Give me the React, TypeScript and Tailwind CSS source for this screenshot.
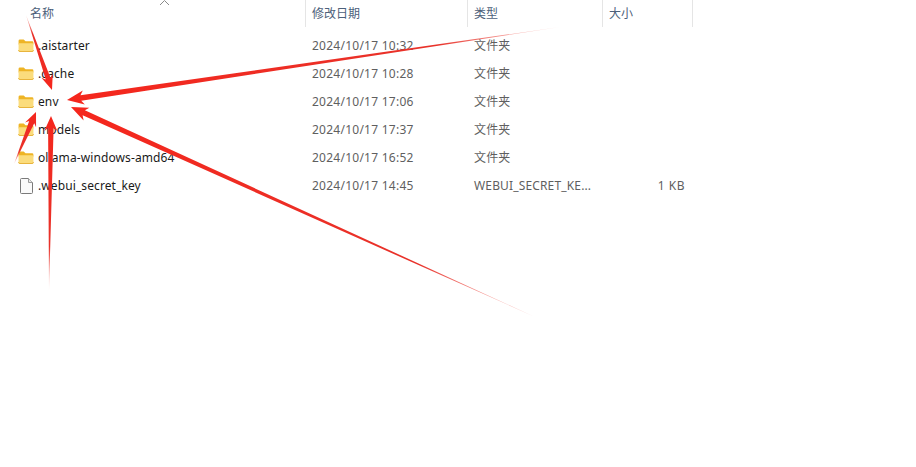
const FOLDER_ROWS = [
  { name: ".aistarter", date: "2024/10/17 10:32" },
  { name: ".cache", date: "2024/10/17 10:28" },
  { name: "env", date: "2024/10/17 17:06" },
  { name: "models", date: "2024/10/17 17:37" },
  { name: "ollama-windows-amd64", date: "2024/10/17 16:52" },
];

const FONT = "font-['Noto_Sans','Noto_Sans_CJK_SC',sans-serif]";

// tail point -> tip, tapered shaft with a barbed head
const ARROWS = [
  { id: "a1", tail: [26, 15], tip: [52, 90], neck: 5, head: 6, len: 15 },
  { id: "a2", tail: [560, 27], tip: [67, 100], neck: 5.5, head: 7, len: 17 },
  { id: "a3", tail: [535, 317], tip: [71, 107], neck: 5.5, head: 7, len: 17 },
  { id: "a4", tail: [14, 164], tip: [36, 112], neck: 5.5, head: 6, len: 14 },
  { id: "a5", tail: [49, 290], tip: [51, 116], neck: 5.5, head: 6.5, len: 15 },
];

function arrowPoints(a: (typeof ARROWS)[number]) {
  const [tx, ty] = a.tail;
  const [px, py] = a.tip;
  const d = Math.hypot(px - tx, py - ty);
  const ux = (px - tx) / d;
  const uy = (py - ty) / d;
  const nx = -uy;
  const ny = ux;
  const at = (back: number, side: number) =>
    `${px - ux * back + nx * side},${py - uy * back + ny * side}`;
  return [
    `${tx},${ty}`,
    at(a.len - 3, a.neck / 2),
    at(a.len, a.head),
    at(0, 0),
    at(a.len, -a.head),
    at(a.len - 3, -a.neck / 2),
  ].join(" ");
}

function FolderIcon() {
  return (
    <svg width="16" height="13" viewBox="0 0 17 14" className="mb-0.5 shrink-0">
      <path d="M0.5 2 Q0.5 0.5 2 0.5 H6 L8 2.5 H15 Q16.5 2.5 16.5 4 V6 H0.5 Z" fill="#eeb425" />
      <path d="M0.5 4.5 H15 Q16.5 4.5 16.5 6 V12 Q16.5 13.5 15 13.5 H2 Q0.5 13.5 0.5 12 Z" fill="#fbdc7c" />
      <path d="M0.5 12 Q0.5 13.5 2 13.5 H15 Q16.5 13.5 16.5 12" fill="none" stroke="#e5ae2e" />
    </svg>
  );
}

function FileIcon() {
  return (
    <svg width="13" height="16" viewBox="0 0 13 16" className="ml-0.5 shrink-0">
      <path d="M0.5 1.5 Q0.5 0.5 1.5 0.5 H8.5 L12.5 4.5 V14.5 Q12.5 15.5 11.5 15.5 H1.5 Q0.5 15.5 0.5 14.5 Z" fill="#fafafa" stroke="#7a7a7a" />
      <path d="M8.5 0.5 V4.5 H12.5" fill="#e8e8e8" stroke="#9a9a9a" />
    </svg>
  );
}

function HeaderCell({ label, className }: { label: string; className: string }) {
  return (
    <div className={`flex h-[27px] items-center text-xs text-[#4c607a] ${className}`}>{label}</div>
  );
}

function Row({
  icon,
  name,
  date,
  type,
  size,
}: {
  icon: React.ReactNode;
  name: string;
  date: string;
  type: string;
  size?: string;
}) {
  return (
    <div className="grid h-7 grid-cols-[306px_162px_135px_90px] items-center text-xs text-[#5f5f5f]">
      <div className="flex items-center pl-[18px] text-[#1a1a1a]">
        <span className="flex w-5 items-center">{icon}</span>
        <span className="tracking-[0.1px]">{name}</span>
      </div>
      <div className="pl-1.5 tracking-[0.25px]">{date}</div>
      <div className="pl-1.5 tracking-[0.15px]">{type}</div>
      <div className="pr-2 text-right tracking-[0.5px]">{size}</div>
    </div>
  );
}

export default function App() {
  return (
    <div className={`relative h-[467px] w-[916px] overflow-hidden bg-white ${FONT}`}>
      <div className="grid w-[693px] grid-cols-[306px_162px_135px_90px]">
        <HeaderCell label="名称" className="border-r border-[#e5e5e5] pl-[30px]" />
        <HeaderCell label="修改日期" className="border-r border-[#e5e5e5] pl-1.5" />
        <HeaderCell label="类型" className="border-r border-[#e5e5e5] pl-1.5" />
        <HeaderCell label="大小" className="border-r border-[#e5e5e5] pl-1.5" />
      </div>
      <div className="mt-[5px]">
        {FOLDER_ROWS.map((r) => (
          <Row key={r.name} icon={<FolderIcon />} name={r.name} date={r.date} type="文件夹" />
        ))}
        <Row
          icon={<FileIcon />}
          name=".webui_secret_key"
          date="2024/10/17 14:45"
          type="WEBUI_SECRET_KE..."
          size="1 KB"
        />
      </div>

      {/* sort caret */}
      <svg width="12" height="6" viewBox="0 0 12 6" className="absolute left-[159px] top-0">
        <path d="M1 5 L5.5 0.5 L10 5" fill="none" stroke="#8a8a8a" />
      </svg>

      {/* annotation arrows */}
      <svg width="916" height="467" viewBox="0 0 916 467" className="absolute left-0 top-0">
        <defs>
          {ARROWS.map((a) => (
            <linearGradient
              key={a.id}
              id={a.id}
              gradientUnits="userSpaceOnUse"
              x1={a.tail[0]}
              y1={a.tail[1]}
              x2={a.tip[0]}
              y2={a.tip[1]}
            >
              <stop offset="0" stopColor="#f0625a" stopOpacity="0.25" />
              <stop offset="0.25" stopColor="#e8322a" />
              <stop offset="1" stopColor="#f5261c" />
            </linearGradient>
          ))}
        </defs>
        {ARROWS.map((a) => (
          <polygon key={a.id} points={arrowPoints(a)} fill={`url(#${a.id})`} />
        ))}
      </svg>
    </div>
  );
}
